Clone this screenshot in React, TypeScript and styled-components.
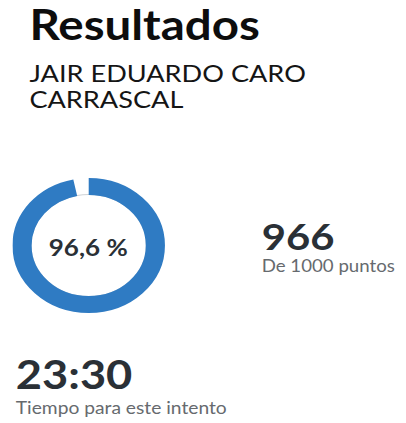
import React from "react";
import styled, { createGlobalStyle } from "styled-components";

const GlobalStyle = createGlobalStyle`
  html, body {
    margin: 0;
    padding: 0;
    background: #ffffff;
  }
  body {
    font-family: Lato, "Open Sans", "Liberation Sans", sans-serif;
    -webkit-font-smoothing: antialiased;
  }
`;

const STRETCH = 1.13;

const Page = styled.main`
  width: ${406 / STRETCH}px;
  transform: scaleX(${STRETCH});
  transform-origin: 0 0;
  display: flex;
  flex-direction: column;
`;

const Header = styled.header`
  padding-left: 26px;
  display: flex;
  flex-direction: column;
`;

const Title = styled.h1`
  margin: 0;
  font-size: 42px;
  line-height: 48px;
  font-weight: 700;
  color: #0d0d0d;
`;

const StudentName = styled.div`
  margin-top: 12px;
  font-size: 24px;
  line-height: 26px;
  font-weight: 400;
  color: #151515;
  max-width: 290px;
  text-transform: uppercase;
`;

const ScoreRow = styled.section`
  margin-top: 66px;
  padding-left: 10.6px;
  display: flex;
  align-items: center;
  gap: 86px;
`;

const RingBox = styled.div`
  position: relative;
  width: 135px;
  height: 135px;
  flex: none;
`;

const RingLabel = styled.div`
  position: absolute;
  inset: 0;
  display: flex;
  align-items: center;
  justify-content: center;
  padding-top: 2px;
  font-size: 23px;
  line-height: 28px;
  font-weight: 700;
  color: #2a3036;
`;

const Stats = styled.div`
  display: flex;
  flex-direction: column;
`;

const BigNumber = styled.div<{ $size: number; $lh: number }>`
  font-size: ${(p) => p.$size}px;
  line-height: ${(p) => p.$lh}px;
  font-weight: 700;
  color: #2a3036;
`;

const Caption = styled.div<{ $size: number; $lh: number }>`
  font-size: ${(p) => p.$size}px;
  line-height: ${(p) => p.$lh}px;
  font-weight: 400;
  color: #666a6e;
`;

const TimeBlock = styled.section`
  margin-top: 37px;
  padding-left: 14px;
  display: flex;
  flex-direction: column;
`;

function ProgressRing({ percent }: { percent: number }) {
  const size = 135;
  const stroke = 17;
  const r = (size - stroke) / 2;
  const c = 2 * Math.PI * r;
  const filled = (percent / 100) * c;
  return (
    <svg width={size} height={size} viewBox={`0 0 ${size} ${size}`}>
      <circle
        cx={size / 2}
        cy={size / 2}
        r={r - stroke / 2 + 0.5}
        fill="none"
        stroke="#cfd3d6"
        strokeWidth={1}
      />
      <circle
        cx={size / 2}
        cy={size / 2}
        r={r}
        fill="none"
        stroke="#2f7bc3"
        strokeWidth={stroke}
        strokeDasharray={`${filled} ${c}`}
        transform={`rotate(-90 ${size / 2} ${size / 2})`}
      />
    </svg>
  );
}

export default function App() {
  return (
    <>
      <GlobalStyle />
      <Page>
        <Header>
          <Title>Resultados</Title>
          <StudentName>JAIR EDUARDO CARO CARRASCAL</StudentName>
        </Header>
        <ScoreRow>
          <RingBox>
            <ProgressRing percent={96.6} />
            <RingLabel>96,6 %</RingLabel>
          </RingBox>
          <Stats>
            <BigNumber $size={37} $lh={40}>966</BigNumber>
            <Caption $size={16.5} $lh={20}>De 1000 puntos</Caption>
          </Stats>
        </ScoreRow>
        <TimeBlock>
          <BigNumber $size={40} $lh={48}>23:30</BigNumber>
          <Caption $size={17} $lh={20}>Tiempo para este intento</Caption>
        </TimeBlock>
      </Page>
    </>
  );
}
